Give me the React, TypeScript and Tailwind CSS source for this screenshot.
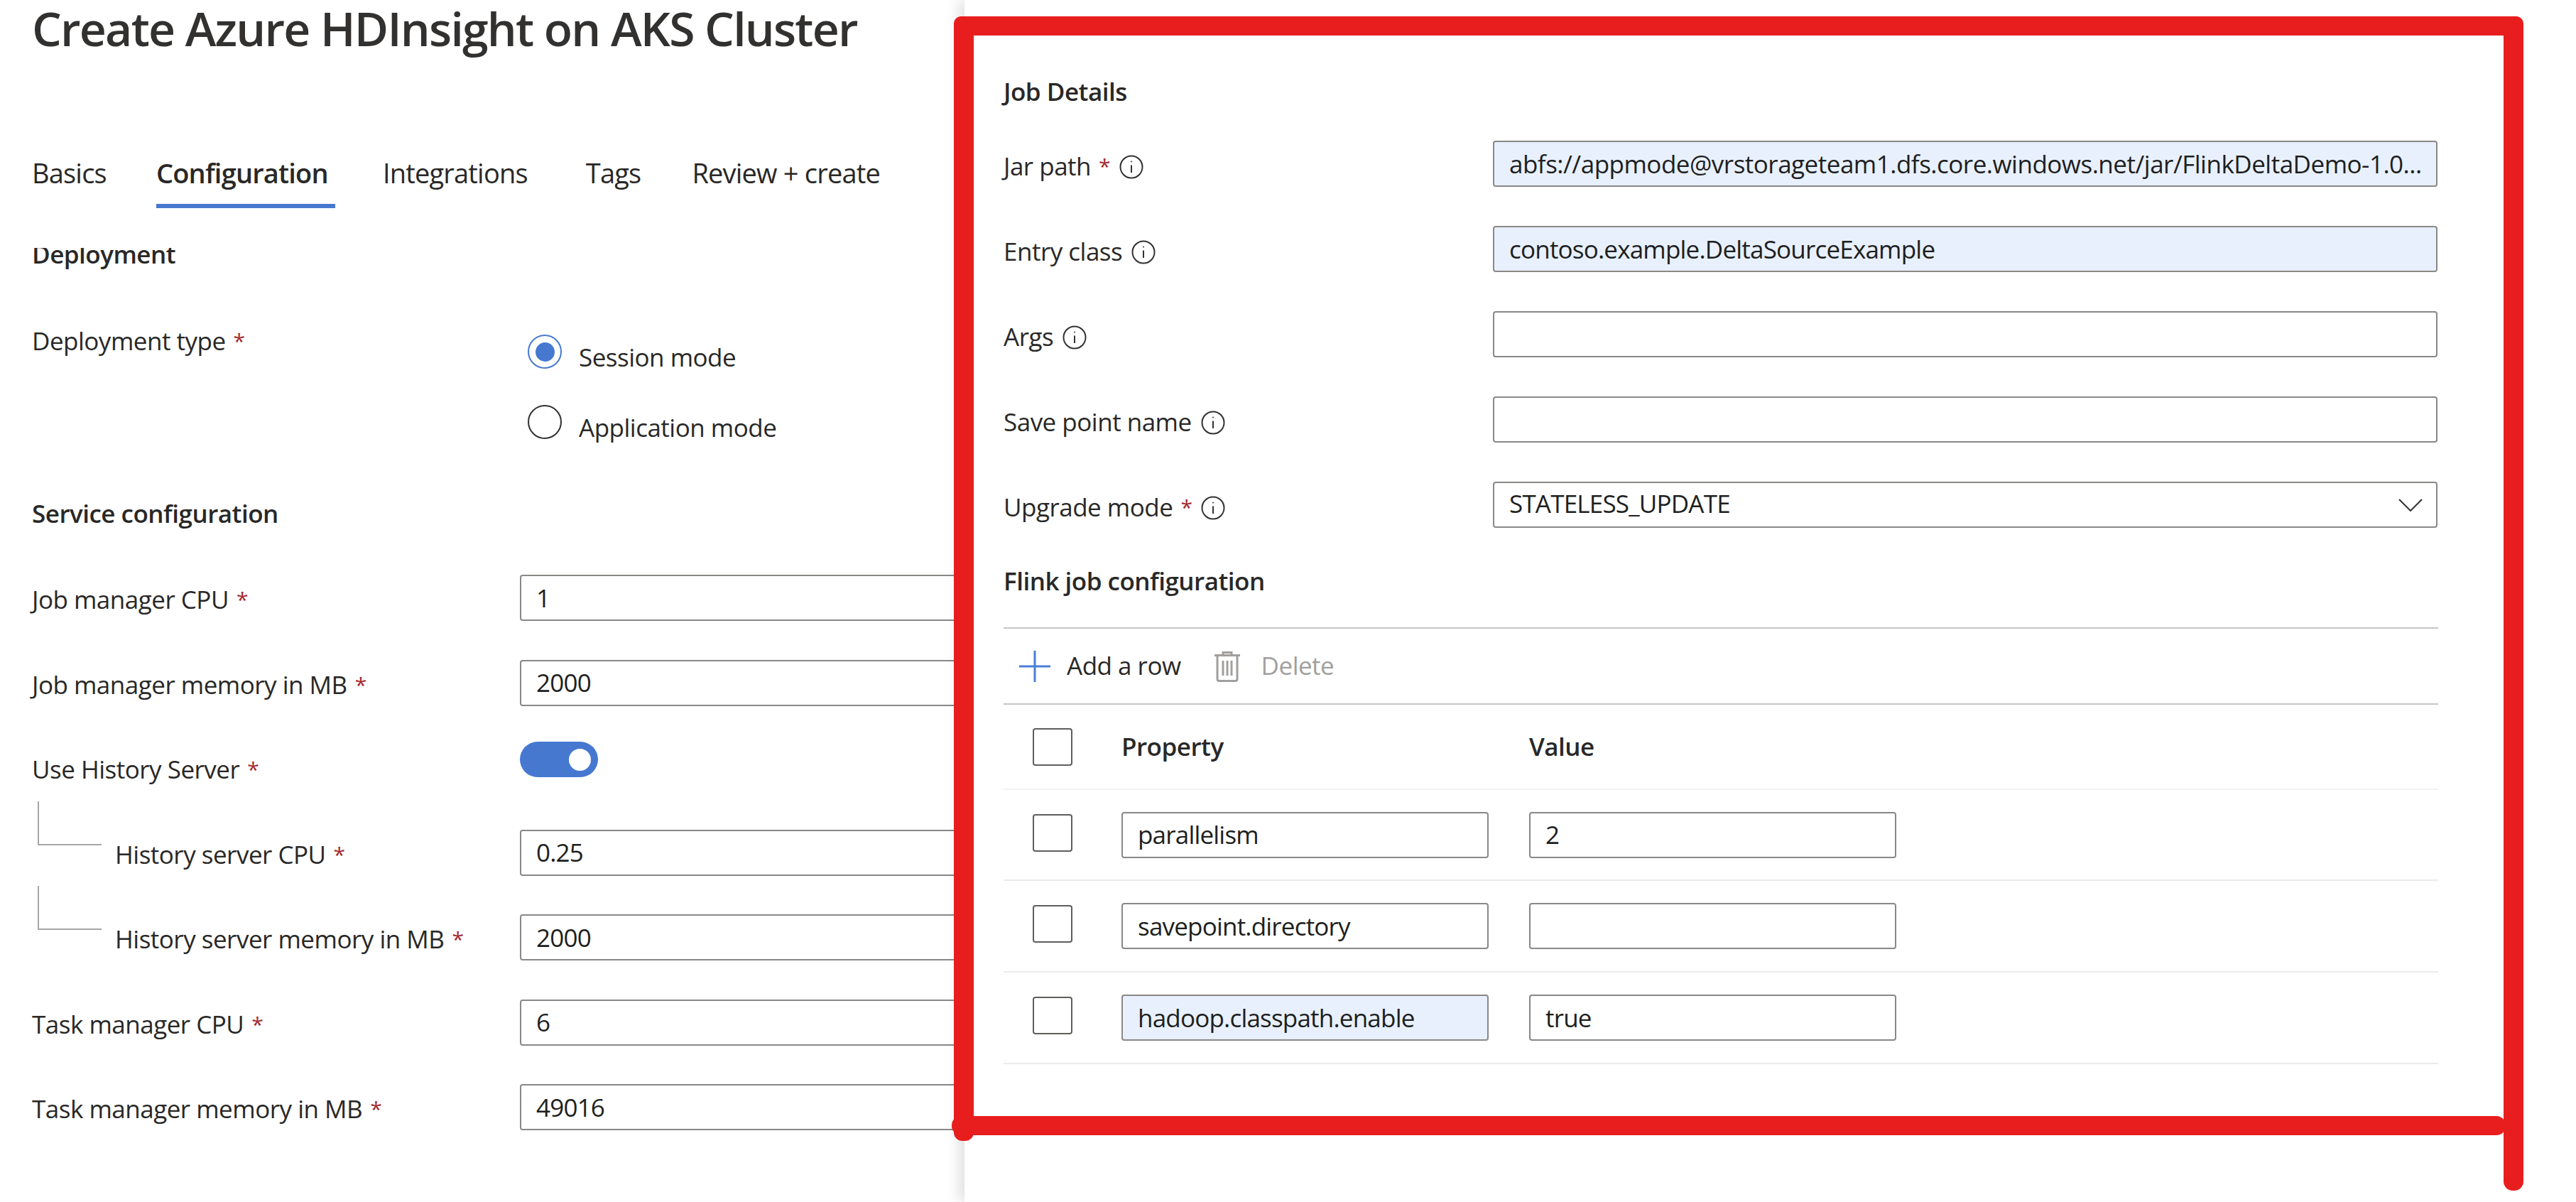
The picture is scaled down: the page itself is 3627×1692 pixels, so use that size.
const tabs = [
  { name: 'Basics', margin: 'mr-[70px]' },
  { name: 'Configuration', margin: 'mr-[67px] h-[73px] w-[252px] border-b-[6px] border-[#4678d0] font-semibold' },
  { name: 'Integrations', margin: 'mr-[82px]' },
  { name: 'Tags', margin: 'mr-[72px]' },
  { name: 'Review + create', margin: '' },
];

function Star() {
  return <span className="ml-[11px] align-[2px] text-[30px] text-[#a4262c]">*</span>;
}

function InfoIcon() {
  return (
    <svg className="ml-[13px] mt-[2px] h-[34px] w-[34px] shrink-0" viewBox="0 0 34 34" fill="none" stroke="#323130" strokeWidth="2">
      <circle cx="17" cy="17" r="15.5" />
      <path d="M17 14.5V25" />
      <circle cx="17" cy="9.5" r="1" fill="#323130" stroke="none" />
    </svg>
  );
}

function TextBox({
  value = '',
  filled = false,
  className = '',
  tracking = 'tracking-[-0.8px]',
}: {
  value?: string;
  filled?: boolean;
  className?: string;
  tracking?: string;
}) {
  return (
    <div className={`flex h-[65px] shrink-0 items-center truncate rounded-[4px] border-2 border-[#8a8886] pl-[21px] pr-[21px] pt-[1px] text-[#201f1e] ${tracking} ${filled ? 'bg-[#e8f0fe]' : 'bg-white'} ${className}`}>
      {value}
    </div>
  );
}

function LeftRow({ label, value, indent = false }: { label: string; value: string; indent?: boolean }) {
  return (
    <div className="flex h-[119.5px] items-start">
      <div className={`w-[687px] shrink-0 whitespace-nowrap pt-[13px] leading-[44px] ${indent ? 'pl-[117px]' : ''}`}>
        {label}
        <Star />
      </div>
      <TextBox value={value} className="w-[800px]" />
    </div>
  );
}

function TreeLine() {
  return <div className="absolute left-[8px] top-[-40px] h-[62px] w-[90px] border-b-2 border-l-2 border-[#a8a6a4]" />;
}

function JobRow({ label, required = false, children }: { label: string; required?: boolean; children: React.ReactNode }) {
  return (
    <div className="flex h-[120px] items-start">
      <div className="flex w-[689px] shrink-0 items-center whitespace-nowrap pt-[14px] leading-[44px]">
        {label}
        {required && <Star />}
        <InfoIcon />
      </div>
      {children}
    </div>
  );
}

function Checkbox({ className = '' }: { className?: string }) {
  return <div className={`h-[53px] w-[56px] rounded-[4px] border-2 border-[#605e5c] bg-white ${className}`} />;
}

function ConfigRow({ property, value, filled = false, height }: { property: string; value: string; filled?: boolean; height: string }) {
  return (
    <div className={`flex items-center border-b-2 border-[#edebe9] pl-[41px] ${height}`}>
      <Checkbox className="mb-[6px] mr-[69px] shrink-0" />
      <TextBox value={property} filled={filled} className="mr-[57px] w-[517px]" />
      <TextBox value={value} className="w-[517px]" />
    </div>
  );
}

export default function App() {
  return (
    <div className="relative flex h-[1692px] w-[3627px] overflow-hidden bg-white font-['Open_Sans','Noto_Sans',sans-serif] text-[35px] tracking-[-0.5px] text-[#292827]">
      {/* Create form, runs on behind the side panel */}
      <div className="flex w-[1358px] shrink-0 flex-col overflow-hidden">
        <h1 className="h-[85px] pl-[45px] text-[66px] font-semibold leading-[78px] tracking-[-1.75px] text-[#323130]">
          Create Azure HDInsight on AKS Cluster
        </h1>

        <div className="mt-[135px] flex h-[73px] pl-[45px] text-[38px] tracking-[-0.8px]">
          {tabs.map((tab) => (
            <div key={tab.name} className={`whitespace-nowrap leading-[46px] ${tab.margin}`}>
              {tab.name}
            </div>
          ))}
        </div>

        <div className="mt-[56px] flex-1 overflow-hidden pl-[45px]">
          <div className="-mt-[13px] h-[44px] font-semibold leading-[44px]">Deployment</div>

          <div className="mt-[78px] flex h-[211px] items-start">
            <div className="w-[698px] shrink-0 leading-[44px]">
              Deployment type
              <Star />
            </div>
            <div className="flex flex-col pt-[13px]">
              <div className="flex h-[99px] items-start gap-[24px]">
                <div className="flex h-[48px] w-[48px] items-center justify-center rounded-full border-2 border-[#4678d0]">
                  <div className="h-[27px] w-[27px] rounded-full bg-[#4678d0]" />
                </div>
                <div className="mt-[10px] leading-[44px]">Session mode</div>
              </div>
              <div className="flex items-start gap-[24px]">
                <div className="h-[48px] w-[48px] rounded-full border-2 border-[#323130]" />
                <div className="mt-[10px] leading-[44px]">Application mode</div>
              </div>
            </div>
          </div>

          <div className="mt-[32px] h-[44px] font-semibold leading-[44px]">Service configuration</div>

          <div className="mt-[64px]">
            <LeftRow label="Job manager CPU" value="1" />
            <LeftRow label="Job manager memory in MB" value="2000" />
            <div className="flex h-[119.5px] items-start">
              <div className="w-[687px] shrink-0 pt-[13px] leading-[44px]">
                Use History Server
                <Star />
              </div>
              <div className="mt-[-4px] flex h-[50px] w-[110px] items-center justify-end rounded-full bg-[#4678d0] pr-[10px]">
                <div className="h-[31px] w-[31px] rounded-full bg-white" />
              </div>
            </div>
            <div className="relative">
              <TreeLine />
              <LeftRow label="History server CPU" value="0.25" indent />
            </div>
            <div className="relative">
              <TreeLine />
              <LeftRow label="History server memory in MB" value="2000" indent />
            </div>
            <LeftRow label="Task manager CPU" value="6" />
            <LeftRow label="Task manager memory in MB" value="49016" />
          </div>
        </div>
      </div>

      {/* Job details side panel */}
      <div className="relative z-10 flex-1 bg-white pl-[55px] shadow-[-8px_0_18px_rgba(0,0,0,0.12)]">
        <div className="mt-[107px] h-[44px] font-semibold leading-[44px]">Job Details</div>

        <div className="mt-[47px] w-[2020px]">
          <JobRow label="Jar path" required>
            <TextBox filled value="abfs://appmode@vrstorageteam1.dfs.core.windows.net/jar/FlinkDeltaDemo-1.0..." tracking="tracking-[-0.5px]" className="w-[1330px]" />
          </JobRow>
          <JobRow label="Entry class">
            <TextBox filled value="contoso.example.DeltaSourceExample" className="w-[1330px]" />
          </JobRow>
          <JobRow label="Args">
            <TextBox className="w-[1330px]" />
          </JobRow>
          <JobRow label="Save point name">
            <TextBox className="w-[1330px]" />
          </JobRow>
          <JobRow label="Upgrade mode" required>
            <div className="flex h-[65px] w-[1330px] items-center justify-between rounded-[4px] border-2 border-[#8a8886] pb-[3px] pl-[21px] pr-[19px] tracking-[-0.8px] text-[#201f1e]">
              STATELESS_UPDATE
              <svg className="mt-[3px] h-[18px] w-[34px]" viewBox="0 0 34 18" fill="none" stroke="#323130" strokeWidth="2">
                <path d="M1 1l16 16L33 1" />
              </svg>
            </div>
          </JobRow>
        </div>

        <div className="-mt-[2px] h-[44px] font-semibold leading-[44px]">Flink job configuration</div>

        <div className="mt-[43px] w-[2020px] border-t-2 border-[#c8c6c4]">
          <div className="flex h-[107px] items-center border-b-2 border-[#c8c6c4] pl-[22px]">
            <svg className="h-[44px] w-[44px] shrink-0" viewBox="0 0 44 44" fill="none" stroke="#4a7fd8" strokeWidth="3">
              <path d="M22 0v44M0 22h44" />
            </svg>
            <span className="ml-[23px] whitespace-nowrap">Add a row</span>
            <svg className="ml-[47px] h-[44px] w-[36px] shrink-0" viewBox="0 0 36 44" fill="none" stroke="#a19f9d" strokeWidth="3">
              <path d="M0 6.5h36M12 6V2.5h12V6M4 7v33a2.5 2.5 0 0 0 2.5 2.5h23A2.5 2.5 0 0 0 32 40V7M12 14v21M18 14v21M24 14v21" />
            </svg>
            <span className="ml-[30px] whitespace-nowrap text-[#a19f9d]">Delete</span>
          </div>

          <div className="flex h-[120px] items-center border-b-2 border-[#f3f2f1] pl-[41px] font-semibold">
            <Checkbox className="mr-[69px] shrink-0" />
            <div className="w-[574px]">Property</div>
            <div>Value</div>
          </div>

          <ConfigRow property="parallelism" value="2" height="h-[128px]" />
          <ConfigRow property="savepoint.directory" value="" height="h-[129px]" />
          <ConfigRow property="hadoop.classpath.enable" value="true" filled height="h-[129px]" />
        </div>
      </div>

      {/* Red highlight drawn on top of the screenshot */}
      <svg className="absolute inset-0 z-20 h-[1692px] w-[3627px]" viewBox="0 0 3627 1692" fill="#e81e1e">
        <rect x="1343" y="23" width="2210" height="27" rx="10" />
        <rect x="1343" y="23" width="28" height="1583" rx="12" />
        <rect x="3525" y="23" width="28" height="1653" rx="13" />
        <rect x="1340" y="1571" width="2188" height="27" rx="13" />
      </svg>
    </div>
  );
}
